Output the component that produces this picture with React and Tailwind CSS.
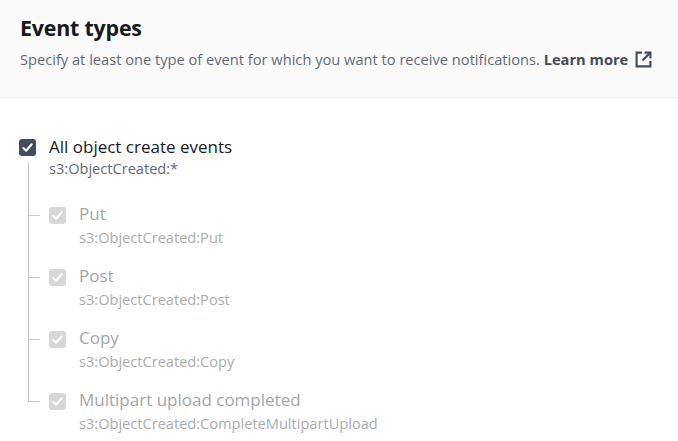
const font = { fontFamily: '"Open Sans", "Noto Sans", Arial, sans-serif' };

const Check = ({ disabled }) => (
  <span
    className={`flex h-[17px] w-[17px] shrink-0 items-center justify-center rounded-[3px] ${
      disabled ? 'bg-[#d5d7da]' : 'bg-[#414d5c]'
    }`}
  >
    <svg width="13" height="13" viewBox="0 0 14 14" fill="none">
      <path d="M2.5 7.5 5.5 10.5 11.5 3.5" stroke="white" strokeWidth="2.2" strokeLinecap="round" strokeLinejoin="round" />
    </svg>
  </span>
);

const children = [
  { label: 'Put', event: 's3:ObjectCreated:Put' },
  { label: 'Post', event: 's3:ObjectCreated:Post' },
  { label: 'Copy', event: 's3:ObjectCreated:Copy' },
  { label: 'Multipart upload completed', event: 's3:ObjectCreated:CompleteMultipartUpload' },
];

export default function App() {
  return (
    <div className="h-[441px] w-[678px] overflow-hidden bg-white" style={font}>
      {/* cabeçalho */}
      <div className="h-[98px] border-b border-[#e9ebed] bg-[#fafafa] px-5 pt-[13px]">
        <h2 className="text-[21.4px] font-bold leading-[30px] tracking-[-0.2px] text-[#16191f]">Event types</h2>
        <p className="mt-[6px] whitespace-nowrap text-[14.65px] leading-[20px] text-[#5f6b7a]">
          Specify at least one type of event for which you want to receive notifications.{' '}
          <span className="font-bold text-[#414d5c]">Learn more</span>
          <svg className="ml-[7px] inline-block align-[-3px]" width="17" height="17" viewBox="0 0 16 16" fill="none">
            <path d="M6.5 1.5H1.5v13h13v-5" stroke="#414d5c" strokeWidth="2" />
            <path d="M9 1.5h5.5V7M14.5 1.5 7 9" stroke="#414d5c" strokeWidth="2" />
          </svg>
        </p>
      </div>

      {/* lista de eventos */}
      <div className="flex gap-[13px] pl-[19px] pt-[38px]">
        <div className="pt-[3px]">
          <Check />
        </div>
        <div>
          <div className="text-[17px] leading-[22px] text-[#16191f]">All object create events</div>
          <div className="text-[14.6px] leading-[20px] text-[#5f6b7a]">s3:ObjectCreated:*</div>

          <div className="mt-[25px]">
            {children.map((c, i) => {
              const last = i === children.length - 1;
              const first = i === 0;
              return (
                <div key={c.label} className={`relative flex gap-[13px] ${last ? '' : 'pb-[18px]'}`}>
                  <span
                    className={`absolute left-[-21px] w-px bg-[#c6c6cd] ${first ? 'top-[-40px]' : 'top-0'} ${
                      last ? 'h-[13px]' : 'bottom-0'
                    }`}
                  />
                  <span className="absolute left-[-21px] top-[12px] h-px w-[12px] bg-[#c6c6cd]" />
                  <div className="pt-[4px]">
                    <Check disabled />
                  </div>
                  <div>
                    <div className="text-[17px] leading-[22px] text-[#a3a6aa]">{c.label}</div>
                    <div className="mt-[2px] text-[14.6px] leading-[20px] text-[#a9adb1]">{c.event}</div>
                  </div>
                </div>
              );
            })}
          </div>
        </div>
      </div>
    </div>
  );
}
